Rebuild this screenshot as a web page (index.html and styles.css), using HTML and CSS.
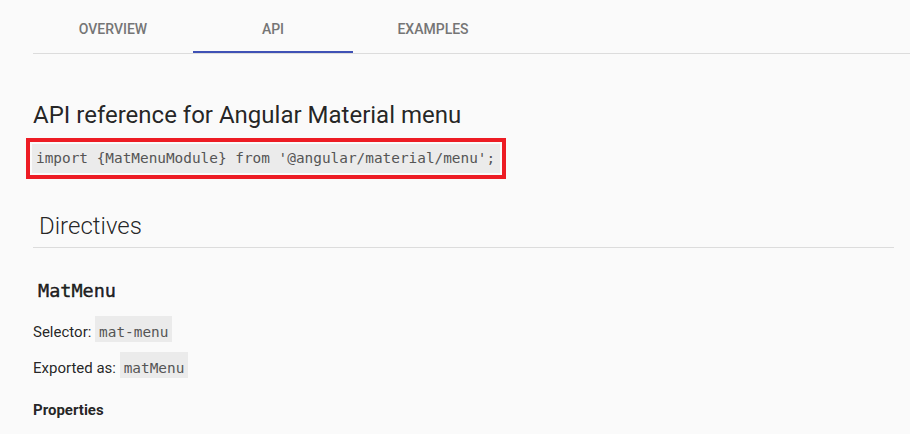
FILE: index.html
```html
<!DOCTYPE html>
<html lang="en">
<head>
<meta charset="utf-8">
<title>Angular Material menu API</title>
<link rel="stylesheet" href="styles.css">
</head>
<body>
  <nav class="tabs">
    <a class="tab">Overview</a>
    <a class="tab tab-active">API</a>
    <a class="tab">Examples</a>
  </nav>
  <main class="content">
    <h1 class="title">API reference for Angular Material menu</h1>
    <div class="import-box"><code class="import-code">import {MatMenuModule} from '@angular/material/menu';</code></div>
    <h2 class="section-title">Directives</h2>
    <h3 class="class-name">MatMenu</h3>
    <p class="meta">Selector: <code class="chip">mat-menu</code></p>
    <p class="meta meta-second">Exported as: <code class="chip">matMenu</code></p>
    <h4 class="sub-title">Properties</h4>
  </main>
</body>
</html>
```
FILE: styles.css
```css
html, body {
  margin: 0;
  padding: 0;
  background: #fafafa;
}
body {
  font-family: Roboto, "Liberation Sans", sans-serif;
  color: rgba(0, 0, 0, 0.87);
  font-size: 15px;
}
.tabs {
  display: flex;
  margin: 5px 0 0 33px;
  border-bottom: 1px solid #dcdcdc;
}
.tab {
  width: 160px;
  height: 44px;
  padding-top: 2px;
  display: flex;
  align-items: center;
  justify-content: center;
  text-transform: uppercase;
  font-weight: 500;
  font-size: 14px;
  color: #757575;
  border-bottom: 2px solid transparent;
}
.tab-active {
  border-bottom-color: #3f51b5;
}
.content {
  padding: 0 16px 0 33px;
}
.title {
  margin: 45px 0 0;
  font-size: 24px;
  line-height: 32px;
  font-weight: 400;
}
.import-box {
  display: inline-block;
  margin: 7px 0 0 -7px;
  border: 4px solid #ed1c24;
  padding: 2px;
  background: #fafafa;
}
.import-code {
  display: block;
  background: #ebebeb;
  font-family: "DejaVu Sans Mono", monospace;
  font-size: 14.4px;
  line-height: 21px;
  padding: 4px 5px 4px 4px;
  color: #555;
}
.section-title {
  margin: 31px 0 0;
  padding: 0 0 5px 6px;
  font-size: 24px;
  line-height: 32px;
  font-weight: 300;
  border-bottom: 1px solid #dcdcdc;
}
.class-name {
  margin: 31px 0 0;
  padding-left: 5px;
  font-family: "DejaVu Sans Mono", monospace;
  font-size: 18.5px;
  line-height: 24px;
  font-weight: 400;
  -webkit-text-stroke: 0.45px rgba(0, 0, 0, 0.87);
}
.meta {
  margin: 13px 0 0;
  line-height: 20px;
}
.meta-second {
  margin-top: 10px;
}
.chip {
  display: inline-block;
  background: #ebebeb;
  font-family: "DejaVu Sans Mono", monospace;
  font-size: 14.4px;
  line-height: 20px;
  padding: 6px 4px 0;
  color: #555;
}
.sub-title {
  margin: 22px 0 0;
  font-size: 15px;
  line-height: 20px;
  font-weight: 700;
}
```
